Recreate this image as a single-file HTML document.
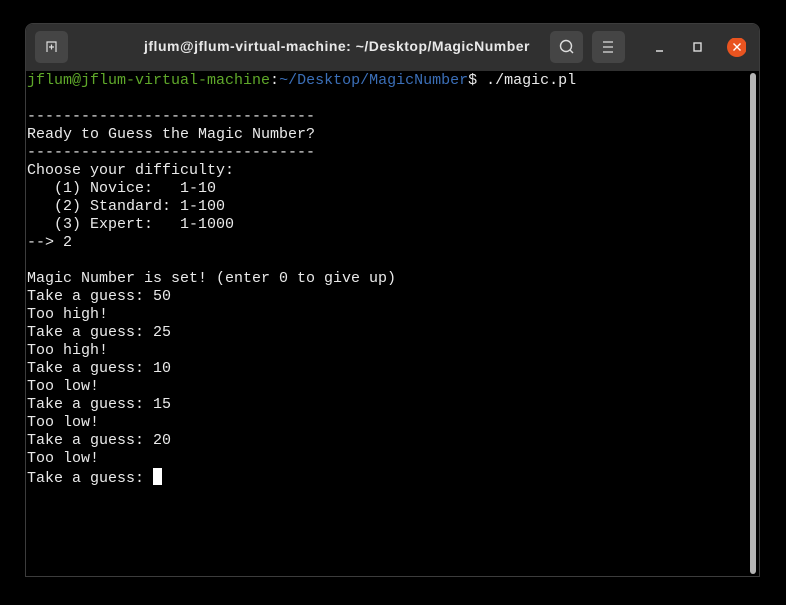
<!DOCTYPE html>
<html><head><style>
html,body{margin:0;padding:0;background:#000;width:786px;height:605px;overflow:hidden}
.win{position:absolute;left:25px;top:23px;width:735px;height:554px;background:#000;border:1px solid #3c3c3c;border-radius:8px 8px 0 0;box-sizing:border-box;overflow:hidden}
.bar{position:absolute;left:0;top:0;right:0;height:47px;background:#303030}
.title{position:absolute;left:86px;width:450px;top:14px;text-align:center;color:#e8e8e8;font:bold 14px "Liberation Sans",sans-serif;letter-spacing:0.5px;white-space:nowrap}
.btn{position:absolute;top:7px;width:33px;height:32px;background:#454545;border-radius:5px}
.term{position:absolute;left:1px;top:48px;font:15px/18px "Liberation Mono",monospace;color:#eaeaea;white-space:pre;margin:0}
.g{color:#5fa82a}.b{color:#3b6fb8}
.cur{display:inline-block;width:9px;height:17px;background:#fff;vertical-align:-3px}
.sb{position:absolute;left:724px;top:49px;width:6px;height:501px;background:#b4b4b4;border-radius:3px}
</style></head><body>
<div class="win">
<div class="bar">
<div class="btn" style="left:9px"><svg width="33" height="32"><path d="M12 21V11h9v10M14 16h5M16.5 13.5v5" stroke="#ddd" fill="none" stroke-width="1.2"/></svg></div>
<div class="title">jflum@jflum-virtual-machine: ~/Desktop/MagicNumber</div>
<div class="btn" style="left:524px"><svg width="33" height="32"><circle cx="16" cy="15" r="5.5" stroke="#ddd" fill="none" stroke-width="1.4"/><path d="M20 19l3 3" stroke="#ddd" stroke-width="1.4"/></svg></div>
<div class="btn" style="left:566px"><svg width="33" height="32"><path d="M11 11h10M11 16h10M11 21h10" stroke="#ddd" stroke-width="1.3"/></svg></div>
<svg style="position:absolute;left:620px;top:14px" width="100" height="20"><path d="M10 13h7" stroke="#ddd" stroke-width="1.5"/><rect x="48" y="5" width="7" height="8" stroke="#ddd" fill="none" stroke-width="1.4"/><circle cx="91" cy="9" r="10" fill="#e95420"/><path d="M87.5 5.5l7 7M94.5 5.5l-7 7" stroke="#fff" stroke-width="1.4"/></svg>
</div>
<pre class="term"><span class="g">jflum@jflum-virtual-machine</span>:<span class="b">~/Desktop/MagicNumber</span>$ ./magic.pl

--------------------------------
Ready to Guess the Magic Number?
--------------------------------
Choose your difficulty:
   (1) Novice:   1-10
   (2) Standard: 1-100
   (3) Expert:   1-1000
--> 2

Magic Number is set! (enter 0 to give up)
Take a guess: 50
Too high!
Take a guess: 25
Too high!
Take a guess: 10
Too low!
Take a guess: 15
Too low!
Take a guess: 20
Too low!
Take a guess: <span class="cur"></span></pre>
<div class="sb"></div>
</div>
</body></html>
